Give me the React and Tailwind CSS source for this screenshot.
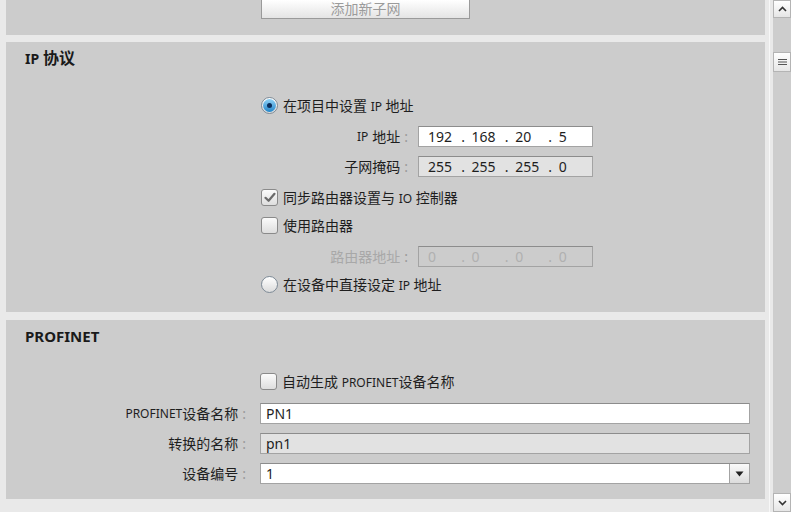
import React from 'react';

const FONT = { fontFamily: '"Noto Sans", "Noto Sans CJK SC", sans-serif' };

function Radio({ checked }) {
  return (
    <span className="w-[17px] h-[17px] rounded-full border border-[#7d8a96] flex items-center justify-center shrink-0 bg-gradient-to-b from-[#ffffff] to-[#dcdcdc]">
      {checked && (
        <span className="w-[13px] h-[13px] rounded-full bg-gradient-to-b from-[#8fd3f7] to-[#1d86c9] flex items-center justify-center">
          <span className="w-[5px] h-[5px] rounded-full bg-[#0b2d5a]" />
        </span>
      )}
    </span>
  );
}

function Check({ checked }) {
  return (
    <span className="w-[17px] h-[17px] rounded-[3px] border border-[#8a8a8a] shrink-0 flex items-center justify-center bg-gradient-to-b from-[#fbfbfb] to-[#dedede]">
      {checked && (
        <svg width="12" height="11" viewBox="0 0 12 11">
          <path d="M1.5 5.8 L4.6 8.8 L10.5 1.8" fill="none" stroke="#6b6b6b" strokeWidth="2.2" strokeLinecap="round" strokeLinejoin="round" />
        </svg>
      )}
    </span>
  );
}

function Label({ children, dim }) {
  return (
    <span className={`flex items-center ${dim ? 'text-[#a8a8a8]' : 'text-[#1e1e1e]'}`}>
      {children}
      <span className="ml-[4px] text-[#9a9a9a]">:</span>
    </span>
  );
}

function IpField({ parts, bg, dim }) {
  return (
    <div className={`w-[175px] h-[21px] border border-[#a3a3a3] border-t-[#8c8c8c] ${bg} flex items-center pl-[9px] text-[14px] ${dim ? 'text-[#b0b0b0]' : 'text-[#1e1e1e]'}`}>
      {parts.map((p, i) => (
        <React.Fragment key={i}>
          <span className="w-[35px]">{p}</span>
          {i < 3 && <span className="w-[11px]">.</span>}
        </React.Fragment>
      ))}
    </div>
  );
}

function Panel({ title, children, className = '' }) {
  return (
    <section className={`bg-[#cccccc] ${className}`}>
      {title && (
        <div className="h-[32px] flex items-center pl-[19px] text-[15px] font-bold text-[#1a1a1a]">{title}</div>
      )}
      {children}
    </section>
  );
}

const Lat = ({ children }) => <span className="text-[12px]">{children}</span>;

export default function App() {
  return (
    <div className="w-[791px] h-[512px] bg-[#e9e9e9] flex overflow-hidden text-[14px]" style={FONT}>
      <div className="w-[765px] pl-[6px] flex flex-col">
        <Panel className="h-[35px]">
          <div className="pl-[255px]">
            <div className="w-[209px] h-[19px] border border-t-0 border-[#9a9a9a] bg-gradient-to-b from-[#ffffff] to-[#e4e4e4] flex items-center justify-center text-[#9b9b9b] text-[14px] leading-none">
              添加新子网
            </div>
          </div>
        </Panel>

        <Panel title={<><span className="text-[14px]">IP</span>&nbsp;<span className="text-[16px]">协议</span></>} className="mt-[7px] h-[270px]">
          <div className="pl-[255px] flex flex-col">
            <div className="mt-[19px] h-[24px] flex items-center gap-[5px] text-[#1e1e1e]">
              <Radio checked />
              <span>在项目中设置 <Lat>IP</Lat> 地址</span>
            </div>
            <div className="mt-[9px] h-[21px] flex items-center">
              <div className="w-[157px] flex justify-end pr-[10px]"><Label><span className="text-[12px] mr-[4px]">IP</span>地址</Label></div>
              <IpField parts={['192', '168', '20', '5']} bg="bg-white" />
            </div>
            <div className="mt-[9px] h-[21px] flex items-center">
              <div className="w-[157px] flex justify-end pr-[10px]"><Label>子网掩码</Label></div>
              <IpField parts={['255', '255', '255', '0']} bg="bg-[#e2e2e2]" />
            </div>
            <div className="mt-[8px] h-[24px] flex items-center gap-[5px] text-[#1e1e1e]">
              <Check checked />
              <span>同步路由器设置与 <Lat>IO</Lat> 控制器</span>
            </div>
            <div className="mt-[4px] h-[24px] flex items-center gap-[5px] text-[#1e1e1e]">
              <Check />
              <span>使用路由器</span>
            </div>
            <div className="mt-[9px] h-[21px] flex items-center">
              <div className="w-[157px] flex justify-end pr-[10px]"><Label dim>路由器地址</Label></div>
              <IpField parts={['0', '0', '0', '0']} bg="bg-[#cccccc]" dim />
            </div>
            <div className="mt-[5px] h-[24px] flex items-center gap-[5px] text-[#1e1e1e]">
              <Radio />
              <span>在设备中直接设定 <Lat>IP</Lat> 地址</span>
            </div>
          </div>
        </Panel>

        <Panel title="PROFINET" className="mt-[8px] h-[179px]">
          <div className="flex flex-col">
            <div className="mt-[17px] h-[24px] flex items-center gap-[5px] pl-[254px] text-[#1e1e1e]">
              <Check />
              <span>自动生成 <Lat>PROFINET</Lat>设备名称</span>
            </div>
            {[
              { label: <><Lat>PROFINET</Lat>设备名称</>, value: 'PN1', bg: 'bg-white' },
              { label: '转换的名称', value: 'pn1', bg: 'bg-[#e2e2e2]' },
              { label: '设备编号', value: '1', bg: 'bg-white', drop: true },
            ].map((r, i) => (
              <div key={i} className={`${i === 0 ? 'mt-[10px]' : 'mt-[9px]'} h-[21px] flex items-center`}>
                <div className="w-[254px] flex justify-end pr-[14px]"><Label>{r.label}</Label></div>
                <div className={`w-[490px] h-[21px] border border-[#a3a3a3] border-t-[#8c8c8c] ${r.bg} flex items-center text-[#1e1e1e]`}>
                  <span className="pl-[5px] flex-1">{r.value}</span>
                  {r.drop && (
                    <span className="w-[20px] h-[19px] border-l border-[#a3a3a3] bg-gradient-to-b from-[#fafafa] to-[#dcdcdc] flex items-center justify-center">
                      <svg width="9" height="6" viewBox="0 0 9 6"><path d="M0.5 0.5 H8.5 L4.5 5.5 Z" fill="#222" /></svg>
                    </span>
                  )}
                </div>
              </div>
            ))}
          </div>
        </Panel>
      </div>

      <div className="w-[8px] flex justify-center">
        <div className="w-[1px] h-full bg-[#f7f7f7]" />
      </div>

      <div className="w-[18px] h-full bg-[#cdcdcd] flex flex-col">
        <div className="h-[18px] border border-[#b4b4b4] bg-gradient-to-b from-[#ffffff] to-[#e6e6e6] flex items-center justify-center">
          <svg width="9" height="6" viewBox="0 0 9 6"><path d="M1 5 L4.5 1.5 L8 5" fill="none" stroke="#333" strokeWidth="1.6" /></svg>
        </div>
        <div className="mt-[34px] h-[20px] border border-[#b4b4b4] bg-gradient-to-b from-[#ffffff] to-[#e6e6e6] flex items-center justify-center">
          <svg width="9" height="8" viewBox="0 0 9 8"><path d="M0 1.5 H9 M0 4 H9 M0 6.5 H9" stroke="#555" strokeWidth="1" /></svg>
        </div>
        <div className="flex-1" />
        <div className="h-[19px] border border-[#b4b4b4] bg-gradient-to-b from-[#ffffff] to-[#e6e6e6] flex items-center justify-center">
          <svg width="9" height="6" viewBox="0 0 9 6"><path d="M1 1 L4.5 4.5 L8 1" fill="none" stroke="#333" strokeWidth="1.6" /></svg>
        </div>
      </div>
    </div>
  );
}
